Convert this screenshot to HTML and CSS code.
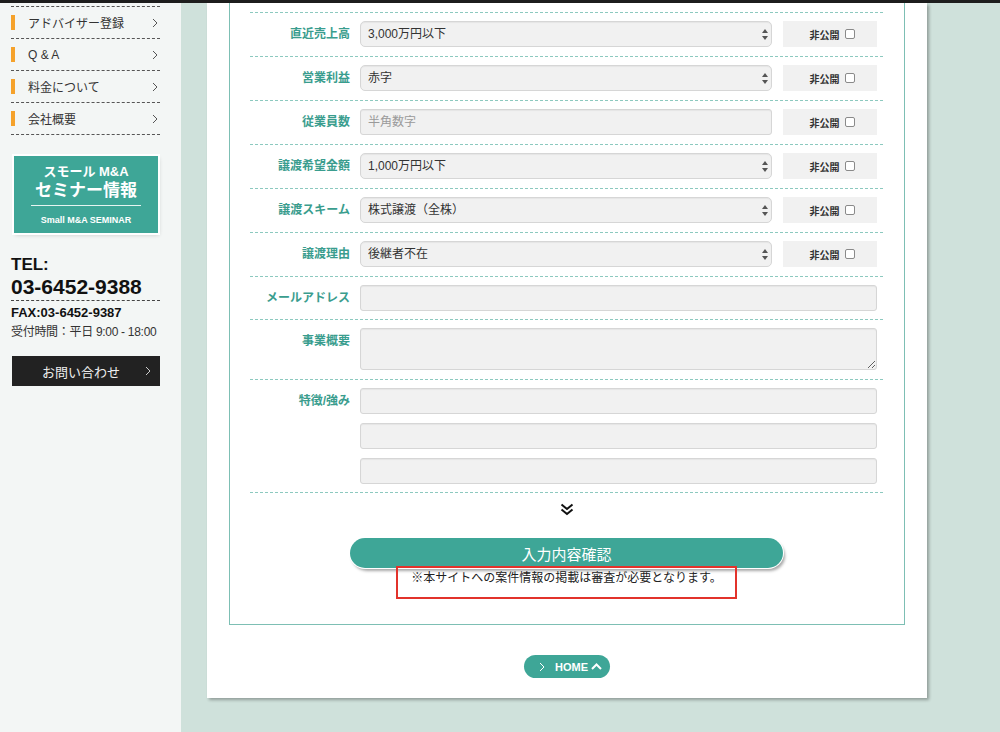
FILE: index.html
```html
<!DOCTYPE html>
<html lang="ja">
<head>
<meta charset="utf-8">
<title>案件登録</title>
<link rel="stylesheet" href="styles.css">
</head>
<body>
<div class="page">
  <aside class="sidebar">
    <ul class="nav">
      <li class="nav-item"><span class="nav-text">アドバイザー登録</span><svg class="nav-arrow" viewBox="0 0 6 10" width="6" height="10"><path d="M1 1 L5 5 L1 9" fill="none" stroke="#555" stroke-width="1"/></svg></li>
      <li class="nav-item"><span class="nav-text">Q &amp; A</span><svg class="nav-arrow" viewBox="0 0 6 10" width="6" height="10"><path d="M1 1 L5 5 L1 9" fill="none" stroke="#555" stroke-width="1"/></svg></li>
      <li class="nav-item"><span class="nav-text">料金について</span><svg class="nav-arrow" viewBox="0 0 6 10" width="6" height="10"><path d="M1 1 L5 5 L1 9" fill="none" stroke="#555" stroke-width="1"/></svg></li>
      <li class="nav-item"><span class="nav-text">会社概要</span><svg class="nav-arrow" viewBox="0 0 6 10" width="6" height="10"><path d="M1 1 L5 5 L1 9" fill="none" stroke="#555" stroke-width="1"/></svg></li>
    </ul>
    <div class="banner">
      <div class="banner-small">スモール M&amp;A</div>
      <div class="banner-big">セミナー情報</div>
      <div class="banner-line"></div>
      <div class="banner-en">Small M&amp;A SEMINAR</div>
    </div>
    <div class="contact">
      <div class="tel-label">TEL:</div>
      <div class="tel-num">03-6452-9388</div>
      <div class="fax">FAX:03-6452-9387</div>
      <div class="hours">受付時間：平日 9:00 - 18:00</div>
      <div class="contact-btn"><span>お問い合わせ</span><svg class="contact-arrow" viewBox="0 0 6 10" width="6" height="10"><path d="M1 1 L5 5 L1 9" fill="none" stroke="#ccc" stroke-width="1"/></svg></div>
    </div>
  </aside>
  <main class="main">
    <div class="panel">
      <div class="formbox">
        <div class="row">
          <div class="label">直近売上高</div>
          <div class="field">
            <div class="select-wrap"><select class="select"><option>3,000万円以下</option></select><svg class="sel-arrow" viewBox="0 0 6 11" width="6" height="11"><path d="M3 0 L6 4 L0 4 Z M3 11 L6 7 L0 7 Z" fill="#555"/></svg></div>
            <div class="private"><span>非公開</span><span class="check"></span></div>
          </div>
        </div>
        <div class="row">
          <div class="label">営業利益</div>
          <div class="field">
            <div class="select-wrap"><select class="select"><option>赤字</option></select><svg class="sel-arrow" viewBox="0 0 6 11" width="6" height="11"><path d="M3 0 L6 4 L0 4 Z M3 11 L6 7 L0 7 Z" fill="#555"/></svg></div>
            <div class="private"><span>非公開</span><span class="check"></span></div>
          </div>
        </div>
        <div class="row">
          <div class="label">従業員数</div>
          <div class="field">
            <input class="input input-short" type="text" placeholder="半角数字">
            <div class="private"><span>非公開</span><span class="check"></span></div>
          </div>
        </div>
        <div class="row">
          <div class="label">譲渡希望金額</div>
          <div class="field">
            <div class="select-wrap"><select class="select"><option>1,000万円以下</option></select><svg class="sel-arrow" viewBox="0 0 6 11" width="6" height="11"><path d="M3 0 L6 4 L0 4 Z M3 11 L6 7 L0 7 Z" fill="#555"/></svg></div>
            <div class="private"><span>非公開</span><span class="check"></span></div>
          </div>
        </div>
        <div class="row">
          <div class="label">譲渡スキーム</div>
          <div class="field">
            <div class="select-wrap"><select class="select"><option>株式譲渡（全株）</option></select><svg class="sel-arrow" viewBox="0 0 6 11" width="6" height="11"><path d="M3 0 L6 4 L0 4 Z M3 11 L6 7 L0 7 Z" fill="#555"/></svg></div>
            <div class="private"><span>非公開</span><span class="check"></span></div>
          </div>
        </div>
        <div class="row">
          <div class="label">譲渡理由</div>
          <div class="field">
            <div class="select-wrap"><select class="select"><option>後継者不在</option></select><svg class="sel-arrow" viewBox="0 0 6 11" width="6" height="11"><path d="M3 0 L6 4 L0 4 Z M3 11 L6 7 L0 7 Z" fill="#555"/></svg></div>
            <div class="private"><span>非公開</span><span class="check"></span></div>
          </div>
        </div>
        <div class="row row-short">
          <div class="label">メールアドレス</div>
          <div class="field">
            <input class="input input-full" type="text">
          </div>
        </div>
        <div class="row">
          <div class="label">事業概要</div>
          <div class="field">
            <textarea class="textarea"></textarea>
          </div>
        </div>
        <div class="row row-short">
          <div class="label">特徴/強み</div>
          <div class="field field-col">
            <input class="input input-full" type="text">
            <input class="input input-full" type="text">
            <input class="input input-full" type="text">
          </div>
        </div>
        <div class="row-end"></div>
        <div class="chevron"><svg viewBox="0 0 14 13" width="14" height="13"><path d="M1.5 1.5 L7 6 L12.5 1.5 M1.5 6.5 L7 11 L12.5 6.5" fill="none" stroke="#111" stroke-width="2"/></svg></div>
        <div class="submit">入力内容確認</div>
        <div class="note">※本サイトへの案件情報の掲載は審査が必要となります。</div>
      </div>
      <div class="home-wrap">
        <div class="home"><svg viewBox="0 0 6 10" width="6" height="10"><path d="M1 1 L5 5 L1 9" fill="none" stroke="#fff" stroke-width="1"/></svg><span class="home-text">HOME</span><svg viewBox="0 0 11 7" width="11" height="7"><path d="M1 6 L5.5 1.5 L10 6" fill="none" stroke="#fff" stroke-width="2"/></svg></div>
      </div>
    </div>
  </main>
</div>
</body>
</html>
```

FILE: styles.css
```css
* { box-sizing: border-box; }
html, body { margin: 0; padding: 0; }
body {
  font-family: "Liberation Sans", "Noto Sans CJK JP", sans-serif;
  color: #333;
  background: #cfe1db;
}
.page {
  display: flex;
  min-height: 732px;
  border-top: 3px solid #1d1d1d;
}
.sidebar {
  width: 181px;
  flex: none;
  background: #f3f6f5;
  padding: 0 21px 0 11px;
}
.nav {
  list-style: none;
  margin: 3px 0 0;
  padding: 0;
  border-top: 1px dashed #555;
}
.nav-item {
  height: 32px;
  border-bottom: 1px dashed #555;
  display: flex;
  align-items: center;
  padding-left: 17px;
  padding-right: 2px;
  position: relative;
  font-size: 12px;
  color: #333;
}
.nav-item::before {
  content: "";
  position: absolute;
  left: 0;
  top: 8px;
  width: 4px;
  height: 15px;
  background: #f5a22b;
}
.nav-text { flex: 1; }
.nav-arrow { display: block; }
.banner {
  margin: 21px 2px 0 3px;
  background: #3ea697;
  color: #fff;
  text-align: center;
  height: 77px;
  padding-top: 8px;
  box-shadow: 0 0 0 2px #fff, 1px 2px 4px rgba(0,0,0,.18);
}
.banner-small { font-size: 13px; font-weight: bold; line-height: 16px; }
.banner-big { font-size: 17px; font-weight: bold; line-height: 20px; margin-top: 1px; }
.banner-line { height: 1px; background: #e6f4f1; margin: 4px 17px 0 17px; }
.banner-en { font-size: 9px; font-weight: bold; line-height: 12px; margin-top: 8px; }
.contact { margin-top: 22px; color: #111; }
.tel-label { font-size: 17px; font-weight: bold; line-height: 20px; }
.tel-num {
  font-size: 21px; font-weight: bold; line-height: 24px;
  border-bottom: 1px dashed #444;
  padding-bottom: 1px;
}
.fax { font-size: 13px; font-weight: bold; line-height: 16px; margin-top: 4px; }
.hours { font-size: 12px; line-height: 16px; margin-top: 3px; color: #333; white-space: nowrap; letter-spacing: -0.3px; }
.contact-btn {
  margin: 16px 0 0 1px;
  height: 30px;
  background: #222;
  color: #eee;
  font-size: 13px;
  display: flex;
  align-items: center;
  justify-content: center;
  position: relative;
}
.contact-btn span { margin-left: -10px; }
.contact-arrow { position: absolute; right: 9px; top: 10px; }
.main {
  flex: 1;
  padding-left: 26px;
}
.panel {
  width: 720px;
  height: 695px;
  background: #fff;
  box-shadow: 2px 2px 3px rgba(0,0,0,.3);
  padding: 0 22px;
}
.formbox {
  border: 1px solid #7dbfb4;
  border-top: none;
  padding: 9px 21px 25px 20px;
}
.row {
  display: flex;
  border-top: 1px dashed #8cc9bf;
  padding: 8px 6px 9px 0;
}
.row-short { padding-bottom: 8px; }
.label {
  width: 110px;
  flex: none;
  padding-right: 10px;
  text-align: right;
  font-size: 12px;
  font-weight: bold;
  line-height: 26px;
  color: #3a9d8e;
}
.field {
  flex: 1;
  display: flex;
  gap: 11px;
}
.field-col { flex-direction: column; gap: 9px; }
.select-wrap {
  position: relative;
  width: 412px;
  height: 26px;
  flex: none;
}
.select {
  display: block;
  appearance: none;
  -webkit-appearance: none;
  width: 100%;
  height: 26px;
  margin: 0;
  border: 1px solid #d6d6d6;
  border-radius: 5px;
  background: #f1f1f1;
  font-family: inherit;
  font-size: 12px;
  color: #333;
  padding: 0 7px;
  box-shadow: inset 0 1px 1px rgba(0,0,0,.05);
}
.sel-arrow { position: absolute; right: 4px; top: 8px; }
.input {
  display: block;
  height: 26px;
  margin: 0;
  border: 1px solid #d6d6d6;
  border-radius: 3px;
  background: #f1f1f1;
  font-family: inherit;
  font-size: 12px;
  color: #333;
  padding: 0 7px;
  box-shadow: inset 0 1px 1px rgba(0,0,0,.05);
}
.input::placeholder { color: #9a9a9a; }
.input-short { width: 412px; flex: none; }
.input-full { width: 100%; }
.textarea {
  width: 100%;
  height: 42px;
  margin: 0;
  border: 1px solid #d6d6d6;
  border-radius: 3px;
  background: #f1f1f1;
  box-shadow: inset 0 1px 1px rgba(0,0,0,.05);
  display: block;
}
.private {
  width: 94px;
  height: 26px;
  flex: none;
  background: #f1f1f1;
  display: flex;
  align-items: center;
  justify-content: center;
  gap: 5px;
  padding-left: 4px;
  font-size: 10px;
  font-weight: bold;
  color: #333;
}
.check {
  width: 10px;
  height: 10px;
  border: 1px solid #8a8a8a;
  border-radius: 2px;
  background: #fff;
}
.row-end { border-top: 1px dashed #8cc9bf; }
.chevron {
  display: flex;
  justify-content: center;
  padding-top: 10px;
  height: 45px;
}
.chevron svg { display: block; }
.submit {
  margin: 0 100px 0 100px;
  height: 30px;
  border-radius: 15px;
  background: #3ea697;
  color: #fff;
  font-size: 15px;
  display: flex;
  align-items: center;
  justify-content: center;
  box-shadow: 0 0 0 1px #fff, 2px 3px 3px rgba(0,0,0,.35);
  position: relative;
  z-index: 1;
}
.note {
  width: 341px;
  height: 33px;
  margin: -2px auto 0;
  border: 2px solid #e2332b;
  font-size: 12px;
  color: #222;
  text-align: center;
  line-height: 18px;
  padding-top: 1px;
  position: relative;
  z-index: 2;
}
.home-wrap {
  display: flex;
  justify-content: center;
  padding-top: 30px;
}
.home {
  width: 86px;
  height: 23px;
  border-radius: 12px;
  background: #3ea697;
  display: flex;
  align-items: center;
  padding-left: 15px;
  color: #fff;
}
.home svg { display: block; flex: none; }
.home-text {
  font-size: 11px;
  font-weight: bold;
  margin: 0 3px 0 10px;
}
```
